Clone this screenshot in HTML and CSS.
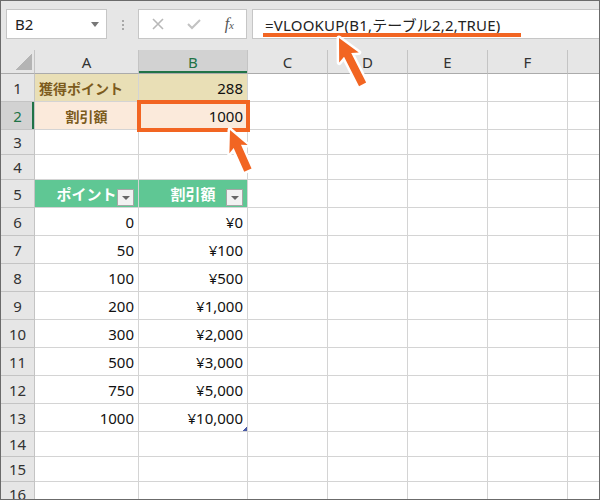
FILE: index.html
```html
<!DOCTYPE html>
<html lang="ja">
  <head>
    <meta charset="UTF-8" />
    <title>VLOOKUP TRUE</title>
    <link rel="stylesheet" href="styles.css">
  </head>
  <body>
    <div class="window">
      <!-- name box + formula bar -->
      <div class="toolbar">
        <div class="namebox">
          <span>B2</span>
          <span class="caret"></span>
        </div>
        <div class="grip"><i></i><i></i><i></i></div>
        <div class="fbuttons">
          <svg width="12" height="12" viewBox="0 0 12 12"><path d="M1 1 L11 11 M11 1 L1 11" stroke="#b8b8b8" stroke-width="1.6" fill="none"/></svg>
          <svg width="14" height="12" viewBox="0 0 14 12"><path d="M1 6 L5 10 L13 2" stroke="#c2c2c2" stroke-width="2" fill="none"/></svg>
          <span class="fx">f<small>x</small></span>
        </div>
        <div class="formula">
          <span class="formula-text">=VLOOKUP(B1,テーブル2,2,TRUE)</span>
          <span class="mark-line"></span>
        </div>
      </div>

      <table class="sheet">
        <colgroup>
          <col style="width:34px"><col style="width:104px"><col style="width:109px">
          <col style="width:80px"><col style="width:80px"><col style="width:80px">
          <col style="width:80px"><col style="width:31px">
        </colgroup>
        <tr class="h24 colhead">
          <th class="corner"></th><th>A</th><th class="sel-col">B</th><th>C</th><th>D</th><th>E</th><th>F</th><th></th>
        </tr>
        <tr class="h28">
          <th>1</th><td class="tan label left">獲得ポイント</td><td class="tan num">288</td><td></td><td></td><td></td><td></td><td></td>
        </tr>
        <tr class="h28">
          <th class="sel-row">2</th><td class="peach label">割引額</td><td class="peach num active">1000</td><td></td><td></td><td></td><td></td><td></td>
        </tr>
        <tr class="h25">
          <th>3</th><td></td><td></td><td></td><td></td><td></td><td></td><td></td>
        </tr>
        <tr class="h25">
          <th>4</th><td></td><td></td><td></td><td></td><td></td><td></td><td></td>
        </tr>
        <tr class="h28">
          <th>5</th>
          <td class="thead"><div class="hcell"><span></span><span>ポイント</span><span class="filter"></span></div></td>
          <td class="thead"><div class="hcell"><span></span><span>割引額</span><span class="filter"></span></div></td>
          <td></td><td></td><td></td><td></td><td></td>
        </tr>
        <tr class="h28">
          <th>6</th><td class="tb num">0</td><td class="tb tb-r num">¥0</td><td></td><td></td><td></td><td></td><td></td>
        </tr>
        <tr class="h28">
          <th>7</th><td class="tb num">50</td><td class="tb tb-r num">¥100</td><td></td><td></td><td></td><td></td><td></td>
        </tr>
        <tr class="h28">
          <th>8</th><td class="tb num">100</td><td class="tb tb-r num">¥500</td><td></td><td></td><td></td><td></td><td></td>
        </tr>
        <tr class="h28">
          <th>9</th><td class="tb num">200</td><td class="tb tb-r num">¥1,000</td><td></td><td></td><td></td><td></td><td></td>
        </tr>
        <tr class="h28">
          <th>10</th><td class="tb num">300</td><td class="tb tb-r num">¥2,000</td><td></td><td></td><td></td><td></td><td></td>
        </tr>
        <tr class="h28">
          <th>11</th><td class="tb num">500</td><td class="tb tb-r num">¥3,000</td><td></td><td></td><td></td><td></td><td></td>
        </tr>
        <tr class="h28">
          <th>12</th><td class="tb num">750</td><td class="tb tb-r num">¥5,000</td><td></td><td></td><td></td><td></td><td></td>
        </tr>
        <tr class="h28">
          <th>13</th><td class="tb num">1000</td><td class="tb tb-r num resize">¥10,000</td><td></td><td></td><td></td><td></td><td></td>
        </tr>
        <tr class="h25">
          <th>14</th><td></td><td></td><td></td><td></td><td></td><td></td><td></td>
        </tr>
        <tr class="h25">
          <th>15</th><td></td><td></td><td></td><td></td><td></td><td></td><td></td>
        </tr>
        <tr class="h25">
          <th>16</th><td></td><td></td><td></td><td></td><td></td><td></td><td></td>
        </tr>
      </table>

      <!-- callout arrows -->
      <svg class="arrows" width="600" height="500" viewBox="0 0 600 500">
        <polygon transform="translate(338,37) rotate(-27)" points="0,0 11,22 4,19 4,52 -4,52 -4,19 -11,22" />
        <polygon transform="translate(229,129) rotate(-24)" points="0,0 10,21 4,18 4,44 -4,44 -4,18 -10,21" />
      </svg>
    </div>
  </body>
</html>
```

FILE: styles.css
```css
body {
  margin: 0;
  font-family: "Noto Sans", "Noto Sans CJK JP", sans-serif;
}

* {
  box-sizing: border-box;
}

.window {
  position: relative;
  width: 600px;
  height: 500px;
  border: 1px solid #6b6b6b;
  overflow: hidden;
  background: #fff;
}

/* formula bar */
.toolbar {
  display: flex;
  align-items: flex-start;
  height: 49px;
  padding: 8px 0 0 5px;
  background: #e6e6e6;
}

.namebox {
  display: flex;
  align-items: center;
  justify-content: space-between;
  width: 101px;
  height: 30px;
  padding: 0 7px 0 8px;
  background: #fff;
  border: 1px solid #c6c6c6;
  font-size: 15px;
  color: #222;
}

.caret {
  width: 0;
  height: 0;
  border-left: 4px solid transparent;
  border-right: 4px solid transparent;
  border-top: 5px solid #777;
}

.grip {
  display: flex;
  flex-direction: column;
  gap: 2px;
  width: 31px;
  align-items: center;
  padding-top: 11px;
}

.grip i {
  width: 2px;
  height: 2px;
  background: #a8a8a8;
}

.fbuttons {
  display: flex;
  align-items: center;
  justify-content: space-between;
  width: 109px;
  height: 30px;
  padding: 0 12px 0 13px;
  background: #fff;
  border: 1px solid #c6c6c6;
}

.fx {
  font-family: "Liberation Serif", serif;
  font-style: italic;
  font-size: 16px;
  color: #555;
}

.fx small {
  font-size: 11px;
}

.formula {
  position: relative;
  flex: 1;
  height: 30px;
  margin-left: 5px;
  padding: 4px 0 0 12px;
  background: #fff;
  border: 1px solid #c6c6c6;
  border-right: none;
  font-size: 15px;
  letter-spacing: 0.2px;
  color: #222;
}

.mark-line {
  position: absolute;
  left: 10px;
  bottom: 1px;
  width: 258px;
  height: 4px;
  background: #f26522;
}

/* sheet grid */
.sheet {
  border-spacing: 0;
  table-layout: fixed;
  width: 598px;
  font-size: 15px;
  color: #111;
}

.sheet td,
.sheet th {
  padding: 0 4px;
  border-right: 1px solid #d4d4d4;
  border-bottom: 1px solid #d4d4d4;
  white-space: nowrap;
  overflow: hidden;
}

.sheet tr > :last-child {
  border-right: none;
}

.h24 { height: 24px; }
.h25 { height: 25px; }
.h28 { height: 28px; }

.sheet th {
  font-weight: normal;
  text-align: center;
  color: #333;
  background: #e6e6e6;
  border-color: #c4c4c4;
}

.colhead th {
  border-bottom-color: #ababab;
}

.corner {
  background: #e6e6e6 linear-gradient(135deg, transparent 50%, #b4b4b4 50%) no-repeat right 2px bottom 3px / 17px 16px !important;
}

.sel-col {
  background: #d2d2d2 !important;
  color: #217346 !important;
  box-shadow: inset 0 -2px #217346;
}

.sel-row {
  background: #d2d2d2 !important;
  color: #217346 !important;
  box-shadow: inset -2px 0 #217346;
}

.num {
  text-align: right;
}

.label {
  text-align: center;
  font-weight: bold;
  font-size: 14px;
  color: #7c5b1d;
}

.left {
  text-align: left;
  padding-left: 6px;
}

.tan {
  background: #e9dfb6;
  border-color: #e9dfb6;
}

.peach {
  background: #fbeadb;
  border-color: #fbeadb;
}

.active {
  outline: 4px solid #f26522;
  outline-offset: -2px;
}

/* table (ListObject) */
.thead {
  padding: 0 1px 0 0;
  background: #5fc794;
  border-color: #5fc794;
  color: #fff;
  font-weight: bold;
  font-size: 15px;
}

.hcell {
  display: grid;
  grid-template-columns: 1fr auto 1fr;
  align-items: center;
}

.filter {
  justify-self: end;
  align-self: end;
  position: relative;
  width: 17px;
  height: 17px;
  margin-top: 8px;
  background: #f2f2f2;
  border: 1px solid #a6a6a6;
}

.filter::after {
  content: "";
  position: absolute;
  left: 4px;
  top: 6px;
  border-left: 4px solid transparent;
  border-right: 4px solid transparent;
  border-top: 4px solid #666;
}

.tb {
  border-bottom-color: #5fc794;
}

.tb-r {
  border-right-color: #5fc794;
}

.resize {
  background: linear-gradient(135deg, transparent 50%, #4a5ba6 50%) no-repeat right 0 bottom 0 / 4px 4px;
}

.arrows {
  position: absolute;
  left: 0;
  top: 0;
  pointer-events: none;
}

.arrows polygon {
  fill: #f26522;
  stroke: #fff;
  stroke-width: 5;
  stroke-linejoin: round;
  paint-order: stroke;
}
```
